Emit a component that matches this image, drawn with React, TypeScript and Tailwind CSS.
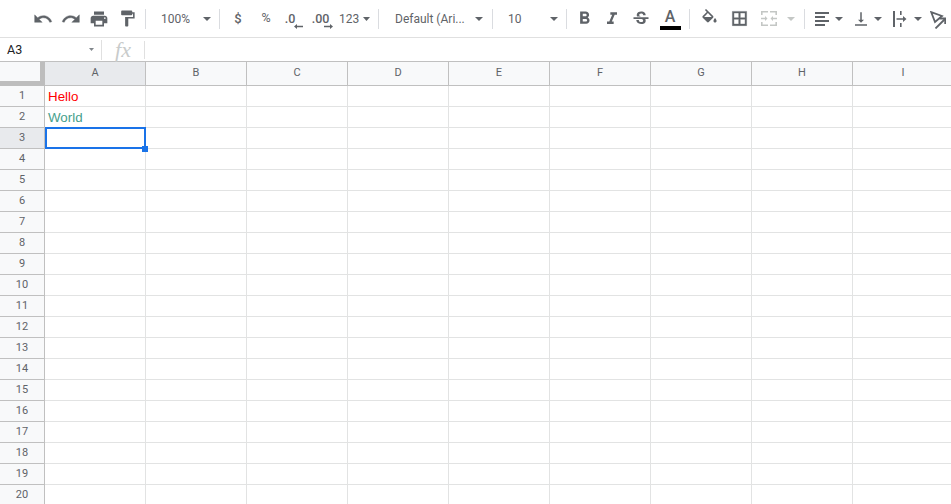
import React from "react";
import {
  MdPrint, MdFormatPaint, MdFormatBold, MdFormatItalic, MdStrikethroughS, MdVerticalAlignBottom,
} from "react-icons/md";

const Caret = ({ light = false, small = false }: { light?: boolean; small?: boolean }) => (
  <svg width={small ? 7 : 8} height={4} viewBox="0 0 8 4" className="block shrink-0" preserveAspectRatio="none">
    <path d="M0 0h8L4 4z" fill={light ? "#c4c7c5" : "#5f6368"} />
  </svg>
);

const Sep = () => <div className="w-px h-[20px] bg-[#dadce0] shrink-0" />;

const Slot = ({ w, className = "", children }: { w: string; className?: string; children: React.ReactNode }) => (
  <div className={`${w} ${className} h-[28px] flex items-center justify-center shrink-0`}>{children}</div>
);

const Arrow = ({ dir }: { dir: "left" | "right" }) => (
  <svg width="9" height="5" viewBox="0 0 9 5" className="block">
    {dir === "left" ? <path d="M0 2.500L3 0v1.700h6v1.600H3V5z" fill="#5f6368" /> : <path d="M9 2.500L6 0v1.700H0v1.600h6V5z" fill="#5f6368" />}
  </svg>
);

const Mat = ({ d, size, stroke = 0 }: { d: string; size: number; stroke?: number }) => (
  <svg width={size} height={size} viewBox="0 0 24 24" fill="#5f6368" stroke="#5f6368" strokeWidth={stroke}>
    <path d={d} />
  </svg>
);

const UNDO = "M12.5 8c-2.65 0-5.05.99-6.9 2.6L2 7v9h9l-3.62-3.62c1.39-1.16 3.16-1.88 5.12-1.88 3.54 0 6.55 2.31 7.6 5.5l2.37-.78C21.08 11.03 17.15 8 12.5 8z";
const REDO = "M18.4 10.6C16.55 8.99 14.15 8 11.5 8c-4.65 0-8.58 3.03-10 7.22L3.87 16c1.05-3.19 4.05-5.5 7.63-5.5 1.95 0 3.73.72 5.12 1.88L13 16h9V7l-3.6 3.6z";
const BORDERS = "M3 3v18h18V3H3zm8 16H5v-6h6v6zm0-8H5V5h6v6zm8 8h-6v-6h6v6zm0-8h-6V5h6v6z";
const FILL = "M16.56 8.94L7.62 0 6.21 1.41l2.38 2.38-5.15 5.15c-.59.59-.59 1.54 0 2.12l5.5 5.5c.29.29.68.44 1.06.44s.77-.15 1.06-.44l5.5-5.5c.59-.58.59-1.53 0-2.12zM5.21 10L10 5.21 14.79 10H5.21zM19 11.5s-2 2.17-2 3.5c0 1.1.9 2 2 2s2-.9 2-2c0-1.33-2-3.5-2-3.5z";

const AlignIcon = () => (
  <svg width="14" height="14" viewBox="0 0 14 14" fill="#5f6368">
    <path d="M0 0h14v2H0zM0 4h10v2H0zM0 8h14v2H0zM0 12h10v2H0z" />
  </svg>
);

const MergeIcon = () => (
  <svg width="16" height="15" viewBox="0 0 16 15" fill="#c4c7c5">
    <path d="M0 0h7v1.600H1.600V4H0zM9 0h7v4h-1.600V1.600H9zM0 11h1.600v2.400H7V15H0zM14.400 11H16v4H9v-1.600h5.400z" />
    <path d="M0 6.700h4V5l2.500 2.500L4 10V8.300H0zM16 6.700h-4V5L9.500 7.500 12 10V8.300h4z" />
  </svg>
);

const ClipIcon = () => (
  <svg width="14" height="16" viewBox="0 0 14 16" fill="#5f6368">
    <path d="M0 0h2v16H0zM7 0h1.600v4H7zM7 12h1.600v4H7z" />
    <path d="M3.500 7.200h6.500V5l3.500 3-3.500 3V8.800H3.500z" />
  </svg>
);

const RotateIcon = () => (
  <svg width="16" height="18" viewBox="0 0 16 18" fill="none" stroke="#5f6368">
    <path d="M1.200 1.200L12 5 5 11z" strokeWidth="1.800" />
    <path d="M5.500 17.500L15 8" strokeWidth="1.800" />
    <path d="M9.500 7.500H15.200V13" strokeWidth="1.800" />
  </svg>
);

const Toolbar = () => (
  <div className="h-[38px] border-b border-[#e0e0e0] flex items-center pl-[29px] text-[12px] text-[#5f6368] whitespace-nowrap">
    <Slot w="w-[28px]"><Mat d={UNDO} size={20} stroke={0.5} /></Slot>
    <Slot w="w-[28px]"><Mat d={REDO} size={20} stroke={0.5} /></Slot>
    <Slot w="w-[28px]"><MdPrint size={20} /></Slot>
    <Slot w="w-[28px]"><MdFormatPaint size={19} /></Slot>
    <div className="w-[4px] shrink-0" />
    <Sep />
    <div className="w-[73px] flex items-center pl-[15px] shrink-0">
      <span className="w-[29px]">100%</span>
      <span className="ml-[13px]"><Caret /></span>
    </div>
    <Sep />
    <div className="w-[4px] shrink-0" />
    <Slot w="w-[28px]"><span className="text-[13px] font-medium">$</span></Slot>
    <Slot w="w-[28px]"><span className="text-[12.500px]">%</span></Slot>
    <Slot w="w-[22px]">
      <div className="flex flex-col items-end pt-[4px] pl-[3px]">
        <span className="leading-[12px] text-[12.500px] font-medium mr-[5px]">.0</span>
        <span className="-mr-[3px] mt-[-1px]"><Arrow dir="left" /></span>
      </div>
    </Slot>
    <Slot w="w-[37px]">
      <div className="flex flex-col items-end pt-[4px] pl-[3px]">
        <span className="leading-[12px] text-[12.500px] font-medium mr-[3px]">.00</span>
        <span className="-mr-[1px] mt-[-1px]"><Arrow dir="right" /></span>
      </div>
    </Slot>
    <div className="w-[39px] flex items-center shrink-0">
      <span className="w-[20px]">123</span>
      <span className="ml-[4px]"><Caret small /></span>
    </div>
    <Sep />
    <div className="w-[113px] flex items-center pl-[16px] shrink-0">
      <span className="w-[80px]">Default (Ari...</span>
      <Caret />
    </div>
    <Sep />
    <div className="w-[73px] flex items-center pl-[15px] shrink-0">
      <span className="w-[42px]">10</span>
      <Caret />
    </div>
    <Sep />
    <div className="w-[3px] shrink-0" />
    <Slot w="w-[28px]"><MdFormatBold size={21} /></Slot>
    <Slot w="w-[28px]"><MdFormatItalic size={20} /></Slot>
    <Slot w="w-[29px]"><MdStrikethroughS size={20} /></Slot>
    <Slot w="w-[29px]" className="pl-[1px]">
      <div className="flex flex-col items-center pt-[2px]">
        <span className="text-[16px] leading-[16px] font-medium">A</span>
        <div className="w-[21px] h-[4px] bg-black mt-[1px]" />
      </div>
    </Slot>
    <div className="w-[5px] shrink-0" />
    <Sep />
    <div className="w-[5px] shrink-0" />
    <Slot w="w-[28px]"><Mat d={FILL} size={19} /></Slot>
    <Slot w="w-[28px]" className="ml-[2px]"><Mat d={BORDERS} size={19} stroke={0.5} /></Slot>
    <Slot w="w-[28px]" className="ml-[2px]"><MergeIcon /></Slot>
    <span className="ml-[4px]"><Caret light /></span>
    <div className="w-[9px] shrink-0" />
    <Sep />
    <Slot w="w-[20px]" className="ml-[7px]"><AlignIcon /></Slot>
    <span className="ml-[3px]"><Caret /></span>
    <Slot w="w-[20px]" className="ml-[8px]"><MdVerticalAlignBottom size={18} /></Slot>
    <span className="ml-[3px]"><Caret /></span>
    <Slot w="w-[20px]" className="ml-[8px]"><ClipIcon /></Slot>
    <span className="ml-[4px]"><Caret /></span>
    <Slot w="w-[18px]" className="ml-[7px] pt-[2px]"><RotateIcon /></Slot>
  </div>
);

const FormulaBar = () => (
  <div className="h-[24px] border-b border-[#c0c0c0] flex items-center text-[13px] text-[#202124]">
    <div className="w-[101px] flex items-center pl-[7px] pr-[7px] shrink-0">
      <span className="flex-1 text-[12.500px] pt-[1px]">A3</span>
      <svg width="5" height="3" viewBox="0 0 5 3"><path d="M0 0h5L2.500 3z" fill="#80868b" /></svg>
    </div>
    <div className="w-px h-[20px] bg-[#e0e0e0] shrink-0" />
    <div className="w-[42px] flex items-center justify-center shrink-0">
      <span className="font-['Liberation_Serif',serif] italic text-[22px] leading-[22px] text-[#c8cbcb]">fx</span>
    </div>
    <div className="w-px h-[18px] bg-[#e0e0e0] shrink-0" />
  </div>
);

const COLS = ["A", "B", "C", "D", "E", "F", "G", "H", "I"];

const ColumnHeader = () => (
  <div className="flex h-[24px]">
    <div className="w-[45px] shrink-0 bg-[#bdbdbd] pr-[5px] pb-[5px]">
      <div className="w-full h-full bg-[#f8f9fa]" />
    </div>
    {COLS.map((c) => (
      <div
        key={c}
        className={`w-[101px] shrink-0 border-r border-b border-[#c0c0c0] flex items-center justify-center text-[11px] text-[#5f6368] ${
          c === "A" ? "bg-[#e8eaed]" : "bg-[#f8f9fa]"
        }`}
      >
        {c}
      </div>
    ))}
  </div>
);

const CELLS: Record<string, { text: string; color: string }> = {
  "1": { text: "Hello", color: "text-[#ff0000]" },
  "2": { text: "World", color: "text-[#46a08c]" },
};

const Row = ({ n }: { n: number }) => {
  const cell = CELLS[String(n)];
  return (
    <div className="flex h-[21px]">
      <div
        className={`w-[45px] shrink-0 border-r border-b border-[#c0c0c0] flex items-center justify-center text-[11px] text-[#5f6368] ${
          n === 3 ? "bg-[#e8eaed]" : "bg-[#f8f9fa]"
        }`}
      >
        {n}
      </div>
      {COLS.map((c, i) => (
        <div key={c} className="relative w-[101px] shrink-0 border-r border-b border-[#e2e3e3]">
          {i === 0 && cell && (
            <span className={`block pl-[3px] pt-[2px] font-['Liberation_Sans',Arial,sans-serif] text-[13.330px] leading-[18px] ${cell.color}`}>
              {cell.text}
            </span>
          )}
          {i === 0 && n === 3 && (
            <div className="absolute left-0 top-[-1px] w-[101px] h-[22px] border-2 border-[#1a73e8] z-10">
              <div className="absolute right-[-4px] bottom-[-5px] w-[6px] h-[6px] bg-[#1a73e8]" />
            </div>
          )}
        </div>
      ))}
    </div>
  );
};

export default function App() {
  return (
    <div className="w-[951px] h-[504px] overflow-hidden bg-white font-['Roboto',sans-serif]">
      <Toolbar />
      <FormulaBar />
      <ColumnHeader />
      {Array.from({ length: 20 }, (_, i) => (
        <Row key={i} n={i + 1} />
      ))}
    </div>
  );
}
